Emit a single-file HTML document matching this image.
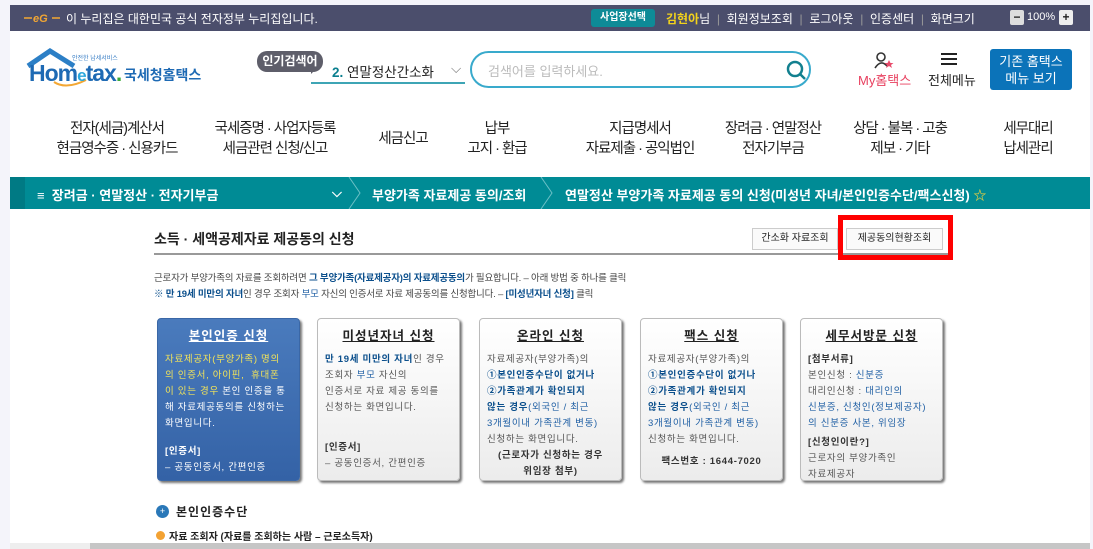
<!DOCTYPE html>
<html><head><meta charset="utf-8">
<style>
*{margin:0;padding:0;box-sizing:border-box}
body{width:1093px;height:549px;overflow:hidden;background:#f4f4fa;font-family:"Liberation Sans","Noto Sans CJK KR",sans-serif;position:relative;color:#222}
.a{position:absolute}
#page{position:absolute;left:10px;top:5px;width:1080px;height:544px;background:#fff}
.top{position:absolute;left:10px;top:5px;width:1080px;height:26px;background:#4b4e6c;color:#fff;font-size:12px}
.menu div{position:absolute;top:119px;font-size:14.5px;line-height:20px;text-align:center;letter-spacing:-1px;color:#222;transform:translateX(-50%);white-space:nowrap}
.bc{position:absolute;left:10px;top:177px;width:1080px;height:32px;background:#008b95;color:#fff;font-size:13px;font-weight:bold}
.card{position:absolute;top:318px;width:143px;height:163px;border:1px solid #bbb;border-radius:4px;background:linear-gradient(#fff,#ececec);box-shadow:2px 2px 2px #777;font-size:9.5px;line-height:16px;padding:0 7px;color:#555;letter-spacing:0.7px;word-break:keep-all}
.card h4{text-align:center;font-size:12.5px;text-decoration:underline;margin:9px 0 8px;color:#222;letter-spacing:1px}
.b{color:#0b4f8c;font-weight:bold}
.bl{color:#2261a5}
</style></head><body>
<div id="page"></div>
<div class="top">
 <svg class="a" style="left:14px;top:6px" width="36" height="14"><path d="M0 7 H8 M28 7 H36" stroke="#f3a733" stroke-width="1.5"/><text x="9" y="11" font-size="11" font-style="italic" font-weight="bold" fill="#f3a733" font-family="Liberation Sans">eG</text></svg>
 <div class="a" style="left:56px;top:5px">이 누리집은 대한민국 공식 전자정부 누리집입니다.</div>
 <div class="a" style="left:581px;top:4px;width:64px;height:18px;background:#0e8b97;border-radius:3px;font-size:10px;font-weight:bold;text-align:center;line-height:18px">사업장선택</div>
 <div class="a" style="left:656px;top:5px"><span style="color:#f2d21c;font-weight:bold">김현아</span>님 <span style="color:#999">&nbsp;|&nbsp;</span> 회원정보조회 <span style="color:#999">&nbsp;|&nbsp;</span> 로그아웃 <span style="color:#999">&nbsp;|&nbsp;</span> 인증센터 <span style="color:#999">&nbsp;|&nbsp;</span> 화면크기</div>
 <div class="a" style="left:1000px;top:5px;width:14px;height:15px;background:#ddd;color:#222;font-weight:bold;text-align:center;line-height:15px;border-radius:2px">−</div>
 <div class="a" style="left:1017px;top:6px;font-size:11px">100%</div>
 <div class="a" style="left:1049px;top:5px;width:14px;height:15px;background:#eee;color:#222;font-weight:bold;text-align:center;line-height:15px;border-radius:2px">+</div>
</div>
<svg class="a" style="left:26px;top:48px" width="70" height="40"><path d="M2 18 L24 3 L48 18" fill="none" stroke="#2c7fc6" stroke-width="5"/><path d="M28 34 Q40 42 60 32" fill="none" stroke="#f3a733" stroke-width="2"/></svg>
<div class="a" style="left:29px;top:60px;font-size:23px;font-weight:bold;color:#1e6ab4;letter-spacing:-1px">Hom<span style="font-size:17px;color:#2ca7dc">e</span>tax<span style="color:#3aaa35">.</span></div>
<div class="a" style="left:72px;top:53px;font-size:6px;color:#3a7fc6">안전한 납세서비스</div>
<div class="a" style="left:124px;top:65px;font-size:14px;font-weight:bold;color:#1e6ab4">국세청홈택스</div>
<div class="a" style="left:257px;top:51px;width:66px;height:21px;background:#5e5e6a;border-radius:10px;color:#fff;font-size:12px;font-weight:bold;text-align:center;line-height:20px">인기검색어</div>
<div class="a" style="left:311px;top:68px;width:0;height:0;border-left:6px solid #5e5e6a;border-bottom:6px solid transparent"></div>
<div class="a" style="left:311px;top:57px;width:154px;height:27px;border-bottom:2px solid #3ea5b5;font-size:13.5px;padding:4px 0 0 21px"><span style="color:#0a7f8f;font-weight:bold">2.</span> 연말정산간소화 <span style="color:#777;position:absolute;left:140px">⌵</span></div>
<div class="a" style="left:470px;top:51px;width:341px;height:37px;border:2px solid #39aacc;border-radius:19px;font-size:13px;color:#bbb;padding:8px 0 0 16px">검색어를 입력하세요.
<svg class="a" style="left:314px;top:7px" width="22" height="22"><circle cx="9" cy="9" r="7" fill="none" stroke="#12808f" stroke-width="2.5"/><path d="M14 14 L19 19" stroke="#12808f" stroke-width="2.5"/></svg></div>
<svg class="a" style="left:874px;top:51px" width="22" height="20"><circle cx="7" cy="6" r="4" fill="none" stroke="#333" stroke-width="1.6"/><path d="M1 17 Q7 8 13 15" fill="none" stroke="#333" stroke-width="1.6"/><path d="M15 9 L16.5 12 L19.5 12 L17 14 L18 17 L15 15 L12 17 L13 14 L10.5 12 L13.5 12Z" fill="#e84a6a"/></svg>
<div class="a" style="left:858px;top:70px;font-size:13px;color:#e8405f">My홈택스</div>
<div class="a" style="left:941px;top:53px;width:16px;height:2px;background:#222;box-shadow:0 5px 0 #222,0 10px 0 #222"></div>
<div class="a" style="left:928px;top:70px;font-size:13px;color:#222">전체메뉴</div>
<div class="a" style="left:990px;top:49px;width:82px;height:41px;background:#0b73b9;border-radius:3px;color:#fff;font-size:13px;text-align:center;line-height:17px;padding-top:4px">기존 홈택스<br>메뉴 보기</div>
<div class="menu">
<div style="left:117px">전자(세금)계산서<br>현금영수증 · 신용카드</div>
<div style="left:275px">국세증명 · 사업자등록<br>세금관련 신청/신고</div>
<div style="left:403px;top:129px">세금신고</div>
<div style="left:497px">납부<br>고지 · 환급</div>
<div style="left:640px">지급명세서<br>자료제출 · 공익법인</div>
<div style="left:773px">장려금 · 연말정산<br>전자기부금</div>
<div style="left:900px">상담 · 불복 · 고충<br>제보 · 기타</div>
<div style="left:1028px">세무대리<br>납세관리</div>
</div>
<div class="bc">
 <div class="a" style="left:0;top:0;width:15px;height:32px;background:#007a84"></div>
 <div class="a" style="left:27px;top:8px">≡ &nbsp;장려금 · 연말정산 · 전자기부금</div>
 <div class="a" style="left:322px;top:8px">⌵</div>
 <svg class="a" style="left:338px;top:0" width="14" height="32"><path d="M1 0 L12 16 L1 32" fill="none" stroke="#6cc0c6" stroke-width="1"/></svg>
 <div class="a" style="left:362px;top:8px">부양가족 자료제공 동의/조회</div>
 <svg class="a" style="left:530px;top:0" width="14" height="32"><path d="M1 0 L12 16 L1 32" fill="none" stroke="#6cc0c6" stroke-width="1"/></svg>
 <div class="a" style="left:555px;top:8px">연말정산 부양가족 자료제공 동의 신청(미성년 자녀/본인인증수단/팩스신청) <span style="color:#f4d23c">☆</span></div>
</div>
<div class="a" style="left:154px;top:229px;font-size:14px;font-weight:bold;color:#222">소득 · 세액공제자료 제공동의 신청</div>
<div class="a" style="left:154px;top:253px;width:796px;height:2px;background:#999"></div>
<div class="a" style="left:752px;top:228px;width:86px;height:22px;border:1px solid #ccc;background:#fafafa;font-size:10px;text-align:center;line-height:20px;color:#222">간소화 자료조회</div>
<div class="a" style="left:838px;top:215px;width:115px;height:45px;border:5px solid #f00"></div>
<div class="a" style="left:846px;top:228px;width:97px;height:22px;border:1px solid #ccc;background:#fafafa;font-size:10px;text-align:center;line-height:20px;color:#222">제공동의현황조회</div>
<div class="a" style="left:154px;top:271px;font-size:9.5px;color:#444;line-height:16px;letter-spacing:-0.2px">근로자가 부양가족의 자료를 조회하려면 <span class="b">그 부양가족(자료제공자)의 자료제공동의</span>가 필요합니다. – 아래 방법 중 하나를 클릭<br><span class="b">※ 만 19세 미만의 자녀</span>인 경우 조회자 <span class="bl">부모</span> 자신의 인증서로 자료 제공동의를 신청합니다. – <span class="b">[미성년자녀 신청]</span> 클릭</div>
<div class="card" style="left:157px;background:linear-gradient(#4a7bbd,#3462a6);color:#fff;border-color:#3a67a6">
<h4 style="color:#fff">본인인증 신청</h4>
<div><span style="color:#f1e35a">자료제공자(부양가족) 명의<br>의 인증서, 아이핀, &nbsp;휴대폰<br>이 있는 경우</span> 본인 인증을 통<br>해 자료제공동의를 신청하는<br>화면입니다.</div>
<div style="margin-top:12px;font-weight:bold">[인증서]</div><div>– 공동인증서, 간편인증</div></div>
<div class="card" style="left:317px">
<h4>미성년자녀 신청</h4>
<div><span class="b">만 19세 미만의 자녀</span>인 경우<br>조회자 <span class="bl">부모</span> 자신의<br>인증서로 자료 제공 동의를<br>신청하는 화면입니다.</div>
<div style="margin-top:24px;font-weight:bold;color:#333">[인증서]</div><div>– 공동인증서, 간편인증</div></div>
<div class="card" style="left:479px">
<h4>온라인 신청</h4>
<div>자료제공자(부양가족)의<br><span class="b">①본인인증수단이 없거나<br>②가족관계가 확인되지<br>않는 경우</span><span class="bl">(외국인 / 최근<br>3개월이내 가족관계 변동)</span><br>신청하는 화면입니다.</div>
<div style="text-align:center;font-weight:bold;color:#333">(근로자가 신청하는 경우<br>위임장 첨부)</div></div>
<div class="card" style="left:640px">
<h4>팩스 신청</h4>
<div>자료제공자(부양가족)의<br><span class="b">①본인인증수단이 없거나<br>②가족관계가 확인되지<br>않는 경우</span><span class="bl">(외국인 / 최근<br>3개월이내 가족관계 변동)</span><br>신청하는 화면입니다.</div>
<div style="text-align:center;font-weight:bold;color:#333;margin-top:6px">팩스번호 : 1644-7020</div></div>
<div class="card" style="left:800px">
<h4>세무서방문 신청</h4>
<div style="font-weight:bold;color:#333">[첨부서류]</div>
<div>본인신청 : <span class="bl">신분증</span><br>대리인신청 : <span class="bl">대리인의<br>신분증, 신청인(정보제공자)<br>의 신분증 사본, 위임장</span></div>
<div style="font-weight:bold;color:#333;margin-top:3px">[신청인이란?]</div><div>근로자의 부양가족인<br>자료제공자</div></div>
<div class="a" style="left:156px;top:505px;width:13px;height:13px;border-radius:50%;background:#2a78b8;color:#fff;font-size:9px;text-align:center;line-height:13px">+</div>
<div class="a" style="left:176px;top:503px;font-size:12px;font-weight:bold;letter-spacing:1px">본인인증수단</div>
<div class="a" style="left:156px;top:531px;width:9px;height:9px;border-radius:50%;background:#f3a233"></div>
<div class="a" style="left:169px;top:528px;font-size:10px;font-weight:bold">자료 조회자 (자료를 조회하는 사람 – 근로소득자)</div>
<div class="a" style="left:10px;top:543px;width:1080px;height:6px;background:#eee"></div>
<div class="a" style="left:90px;top:543px;width:1000px;height:6px;background:#c6c6c6"></div>
</body></html>
